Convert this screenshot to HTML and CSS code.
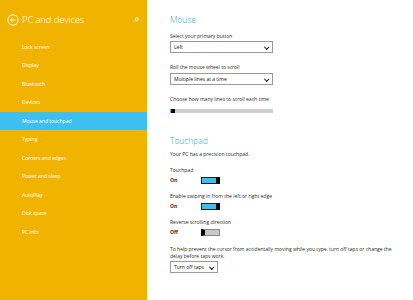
FILE: index.html
```html
<!DOCTYPE html>
<html lang="en">
<head>
<meta charset="UTF-8" />
<title>PC and devices</title>
<link rel="stylesheet" href="styles.css">
</head>
<body>
<div class="settings">
  <nav class="nav">
    <div class="nav-head">
      <svg class="back" width="12" height="12" viewBox="0 0 12 12" fill="none" stroke="#fff" stroke-width="0.9">
        <circle cx="6" cy="6" r="5.2"/>
        <path d="M3.4 6h5.2M5.6 3.6L3.3 6l2.3 2.4"/>
      </svg>
      <span class="nav-title">PC and devices</span>
      <svg class="search" width="6" height="6" viewBox="0 0 6 6" fill="none" stroke="#fff" stroke-width="1">
        <circle cx="3.8" cy="2.2" r="1.5"/>
        <path d="M2.7 3.3L0.8 5.2"/>
      </svg>
    </div>
    <ul class="nav-list">
      <li>Lock screen</li>
      <li>Display</li>
      <li>Bluetooth</li>
      <li>Devices</li>
      <li class="active">Mouse and touchpad</li>
      <li>Typing</li>
      <li>Corners and edges</li>
      <li>Power and sleep</li>
      <li>AutoPlay</li>
      <li>Disk space</li>
      <li>PC info</li>
    </ul>
  </nav>

  <main class="content">
    <h2 class="section-title">Mouse</h2>
    <div class="label">Select your primary button</div>
    <div class="select wide">Left<span class="chev"></span></div>
    <div class="label gap">Roll the mouse wheel to scroll</div>
    <div class="select wide tight">Multiple lines at a time<span class="chev"></span></div>
    <div class="label gap">Choose how many lines to scroll each time</div>
    <div class="slider"><span class="slider-fill"></span><span class="slider-thumb"></span></div>

    <h2 class="section-title touch">Touchpad</h2>
    <div class="label first">Your PC has a precision touchpad.</div>

    <div class="label setting">Touchpad</div>
    <div class="toggle-row"><span class="state">On</span><span class="toggle on"></span></div>

    <div class="label setting">Enable swiping in from the left or right edge</div>
    <div class="toggle-row"><span class="state">On</span><span class="toggle on"></span></div>

    <div class="label setting">Reverse scrolling direction</div>
    <div class="toggle-row"><span class="state">Off</span><span class="toggle off"></span></div>

    <p class="note">To help prevent the cursor from accidentally moving while you type, turn off taps or change the delay before taps work.</p>
    <div class="select small">Turn off taps<span class="chev"></span></div>
  </main>
</div>
</body>
</html>
```

FILE: styles.css
```css
/* settings pane, two columns */
body { margin: 0; font-family: "Open Sans", "Liberation Sans", sans-serif; background: #fff; }
.settings { display: flex; width: 413px; height: 300px; overflow: hidden; }

.nav { width: 147px; flex: none; background: #f0b400; color: #fff; }
.nav-head {
  display: flex;
  align-items: center;
  height: 14px;
  margin-top: 13px;
  padding-left: 7px;
}
.back { flex: none; }
.nav-title {
  margin-left: 3px;
  font-size: 9.5px;
  font-weight: 300;
  letter-spacing: -0.15px;
  line-height: 14px;
}
.search { margin-left: auto; margin-right: 8px; }

.nav-list { list-style: none; margin: 10.75px 0 0; padding: 0; }
.nav-list li {
  height: 18.5px;
  line-height: 18.5px;
  padding-left: 22px;
  font-size: 5px;
}
.nav-list li.active { background: #3fbff0; }

.content { flex: 1; padding: 12px 0 0 23px; color: #2a2a2a; font-size: 5px; }
.section-title {
  margin: 0;
  font-size: 8.6px;
  font-weight: 300;
  letter-spacing: -0.1px;
  line-height: 16px;
  color: #3aa9e0;
}
.section-title.touch { margin-top: 20px; }

.label { line-height: 8px; margin-top: 4px; }
.label.gap { margin-top: 10px; }
.label.first { margin-top: 1px; }
.label.setting { margin-top: 8px; }

.select {
  position: relative;
  box-sizing: border-box;
  height: 12px;
  margin-top: 1px;
  padding-left: 3px;
  border: 1px solid #9a9a9a;
  line-height: 10px;
  color: #111;
}
.select.wide { width: 103px; }
.select.tight { margin-top: 2px; }
.select.small { width: 48px; margin-top: 1.5px; }
.chev {
  position: absolute;
  right: 4px;
  top: 2.5px;
  width: 2.5px;
  height: 2.5px;
  border-right: 1px solid #111;
  border-bottom: 1px solid #111;
  transform: rotate(45deg);
}

.slider {
  display: flex;
  align-items: center;
  width: 103px;
  height: 4px;
  margin-top: 6px;
  background: #cfcfcf;
}
.slider-fill { width: 1px; height: 4px; background: #3fbff0; }
.slider-thumb { width: 4px; height: 4px; background: #000; }

.toggle-row { display: flex; align-items: center; height: 8px; margin-top: 2px; }
.state { width: 31px; font-weight: 700; }
.toggle { display: flex; width: 19px; height: 7px; box-sizing: border-box; }
.toggle.on { background: #3fbff0; border: 1px solid #222; border-right: 4px solid #000; }
.toggle.off { background: #c8c8c8; border: 1px solid #888; border-left: 4px solid #000; }

.note { margin: 9.5px 0 0; width: 230px; line-height: 7px; }
```
